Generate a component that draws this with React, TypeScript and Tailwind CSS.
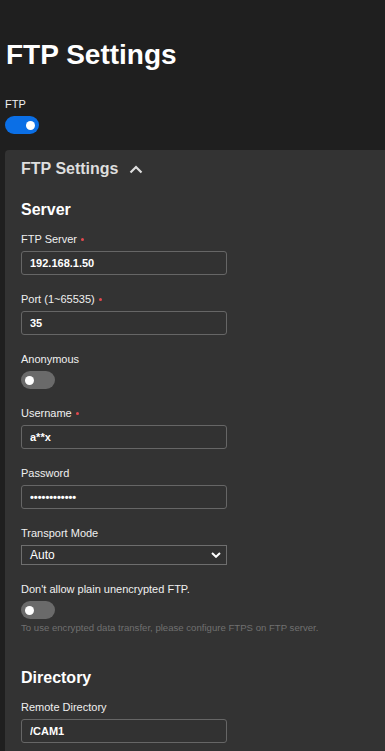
import React from "react";

const font = { fontFamily: '"Liberation Sans", Arial, sans-serif' };

function Label({ text, required }: { text: string; required?: boolean }) {
  return (
    <div className="flex items-center text-[11px] leading-[14px] text-[#f0f0f0] mb-[5px]">
      <span>{text}</span>
      {required && <span className="ml-[4px] inline-block w-[3px] h-[3px] rounded-full bg-[#e5484d]" />}
    </div>
  );
}

function Toggle({ on }: { on: boolean }) {
  return (
    <div
      className={
        "w-[34px] h-[18px] rounded-full flex items-center px-[4px] " +
        (on ? "bg-[#0b6fe6] justify-end" : "bg-[#6a6a6a] justify-start")
      }
    >
      <div className="w-[9px] h-[9px] rounded-full bg-white" />
    </div>
  );
}

function TextInput({ value, type = "text" }: { value: string; type?: string }) {
  return (
    <input
      type={type}
      defaultValue={value}
      readOnly
      style={font}
      className="block w-[206px] h-[24px] rounded-[3px] border border-[#666666] bg-[#323232] px-[8px] text-[11px] font-bold text-white outline-none"
    />
  );
}

export default function App() {
  return (
    <div style={font} className="min-h-[751px] w-full overflow-hidden bg-[#1f1f1f] text-white">
      <h1 className="pl-[6px] pt-[39px] text-[28px] leading-[32px] font-bold text-white">FTP Settings</h1>
      <div className="pl-[5px] mt-[26px]">
        <Label text="FTP" />
        <Toggle on={true} />
      </div>
      <div className="ml-[5px] mt-[16px] rounded-tl-[4px] bg-[#333333] pl-[16px] pt-[10px] pb-[40px]">
        <div className="flex items-center gap-[10px] text-[16px] leading-[18px] font-bold text-[#dedede]">
          <span>FTP Settings</span>
          <svg width="14" height="9" viewBox="0 0 14 9" fill="none">
            <path d="M1.5 7.5 L7 2 L12.5 7.5" stroke="#dedede" strokeWidth="2.2" />
          </svg>
        </div>

        <h2 className="mt-[23px] text-[16px] leading-[18px] font-bold text-white">Server</h2>

        <div className="mt-[13px] flex flex-col gap-[17px]">
          <div>
            <Label text="FTP Server" required />
            <TextInput value="192.168.1.50" />
          </div>
          <div>
            <Label text="Port (1~65535)" required />
            <TextInput value="35" />
          </div>
          <div>
            <Label text="Anonymous" />
            <Toggle on={false} />
          </div>
          <div>
            <Label text="Username" required />
            <TextInput value="a**x" />
          </div>
          <div>
            <Label text="Password" />
            <TextInput value="abcdefghijkl" type="password" />
          </div>
          <div>
            <Label text="Transport Mode" />
            <div className="relative w-[206px] h-[20px] border border-[#6e6e6e] bg-[#323232] flex items-center pl-[8px] text-[12px] text-white">
              <span>Auto</span>
              <svg className="absolute right-[5px] top-[6px]" width="10" height="6" viewBox="0 0 10 6" fill="none">
                <path d="M1 1 L5 4.8 L9 1" stroke="#ffffff" strokeWidth="2" />
              </svg>
            </div>
          </div>
          <div>
            <Label text="Don't allow plain unencrypted FTP." />
            <Toggle on={false} />
            <p className="mt-[3px] text-[9.6px] leading-[12px] text-[#707070]">
              To use encrypted data transfer, please configure FTPS on FTP server.
            </p>
          </div>
        </div>

        <h2 className="mt-[35px] text-[16px] leading-[18px] font-bold text-white">Directory</h2>
        <div className="mt-[13px]">
          <Label text="Remote Directory" />
          <TextInput value="/CAM1" />
        </div>
      </div>
    </div>
  );
}
